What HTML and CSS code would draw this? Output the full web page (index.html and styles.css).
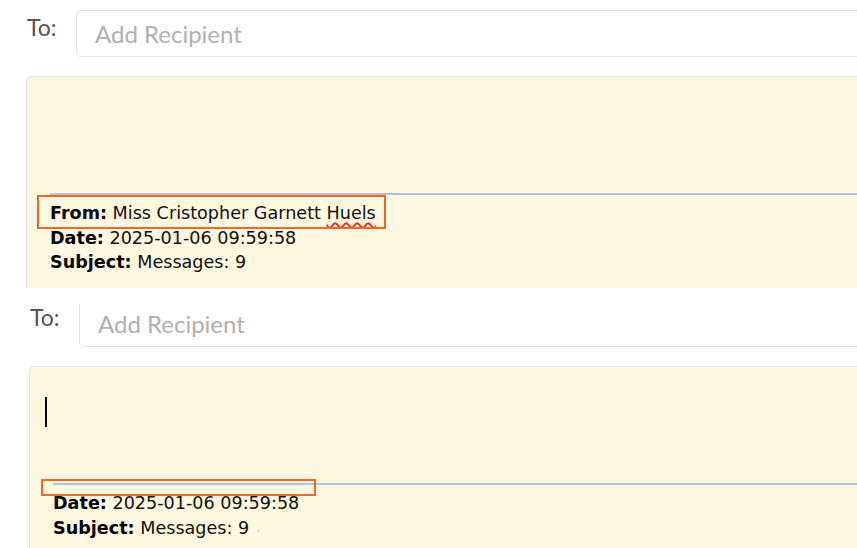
FILE: index.html
```html
<!DOCTYPE html>
<html lang="en">
<head>
<meta charset="utf-8">
<title>Compose</title>
<link rel="stylesheet" href="styles.css">
</head>
<body>
<div class="page">
  <section class="shot shot-first">
    <div class="frame">
      <div class="to-row">
        <span class="to-label">To:</span>
        <div class="recipient">Add Recipient</div>
      </div>
      <div class="editor">
        <div class="body-area"></div>
        <hr class="sep">
        <div class="meta">
          <div class="line"><b>From:</b> Miss Cristopher Garnett <span class="misspelled">Huels</span></div>
          <div class="line"><b>Date:</b> 2025-01-06 09:59:58</div>
          <div class="line"><b>Subject:</b> Messages: 9</div>
        </div>
        <div class="mark mark-from"></div>
      </div>
    </div>
  </section>
  <section class="shot shot-second">
    <div class="frame">
      <div class="to-row">
        <span class="to-label">To:</span>
        <div class="recipient">Add Recipient</div>
      </div>
      <div class="editor">
        <div class="body-area"><span class="caret"></span></div>
        <hr class="sep">
        <div class="meta">
          <div class="line"><b>Date:</b> 2025-01-06 09:59:58</div>
          <div class="line"><b>Subject:</b> Messages: 9<span class="speck"></span></div>
        </div>
        <div class="mark mark-empty"></div>
      </div>
    </div>
  </section>
</div>
</body>
</html>
```

FILE: styles.css
```css
html, body {
  margin: 0;
  padding: 0;
  background: #ffffff;
}

.page {
  width: 857px;
  height: 548px;
  overflow: hidden;
  display: flex;
  flex-direction: column;
}

.shot {
  overflow: hidden;
  flex: none;
}

.shot-first {
  height: 288px;
}

.shot-second {
  margin-top: 16px;
  height: 244px;
  padding-left: 3px;
}

.shot-second .frame {
  margin-top: -14px;
}

.frame {
  padding: 10px 0 0 26px;
  width: 900px;
}

.to-row {
  display: flex;
  align-items: flex-start;
  height: 47px;
}

.to-label {
  font-family: Lato, "Open Sans", sans-serif;
  font-size: 23px;
  color: #555555;
  margin-left: 1px;
  width: 49px;
  line-height: 34px;
}

.recipient {
  flex: 1;
  box-sizing: border-box;
  height: 47px;
  border: 1px solid #e3e3e3;
  border-radius: 5px;
  padding-left: 18px;
  font-family: Lato, "Open Sans", sans-serif;
  font-size: 24px;
  line-height: 46px;
  color: #b1b1b1;
}

.editor {
  position: relative;
  margin-top: 19px;
  background: #fef8e0;
  border: 1px solid #e3e3e3;
  border-radius: 5px 0 0 0;
  height: 400px;
  padding-left: 23px;
}

.body-area {
  height: 116px;
  box-sizing: border-box;
  padding: 30px 0 0 15px;
  margin-left: -23px;
}

.caret {
  display: block;
  width: 2px;
  height: 30px;
  background: #000000;
}

.sep {
  margin: 0;
  border: none;
  height: 2px;
  background: #b3c5de;
}

.meta {
  padding-top: 6px;
  font-family: "DejaVu Sans", Verdana, sans-serif;
  font-size: 17.6px;
  line-height: 24.5px;
  color: #111111;
}

.meta b {
  font-weight: bold;
  color: #000000;
}

.misspelled {
  text-decoration: underline wavy #e0301e;
  text-decoration-thickness: 1.5px;
  text-underline-offset: 3px;
}

.speck {
  display: inline-block;
  width: 1px;
  height: 2px;
  margin-left: 9px;
  background: #c8c8c8;
  vertical-align: 2px;
}

.mark {
  position: absolute;
  border: 2px solid #f06a25;
  box-sizing: border-box;
}

.mark-from {
  left: 10px;
  top: 118px;
  width: 349px;
  height: 34px;
}

.mark-empty {
  left: 11px;
  top: 112px;
  width: 275px;
  height: 17px;
}
```
